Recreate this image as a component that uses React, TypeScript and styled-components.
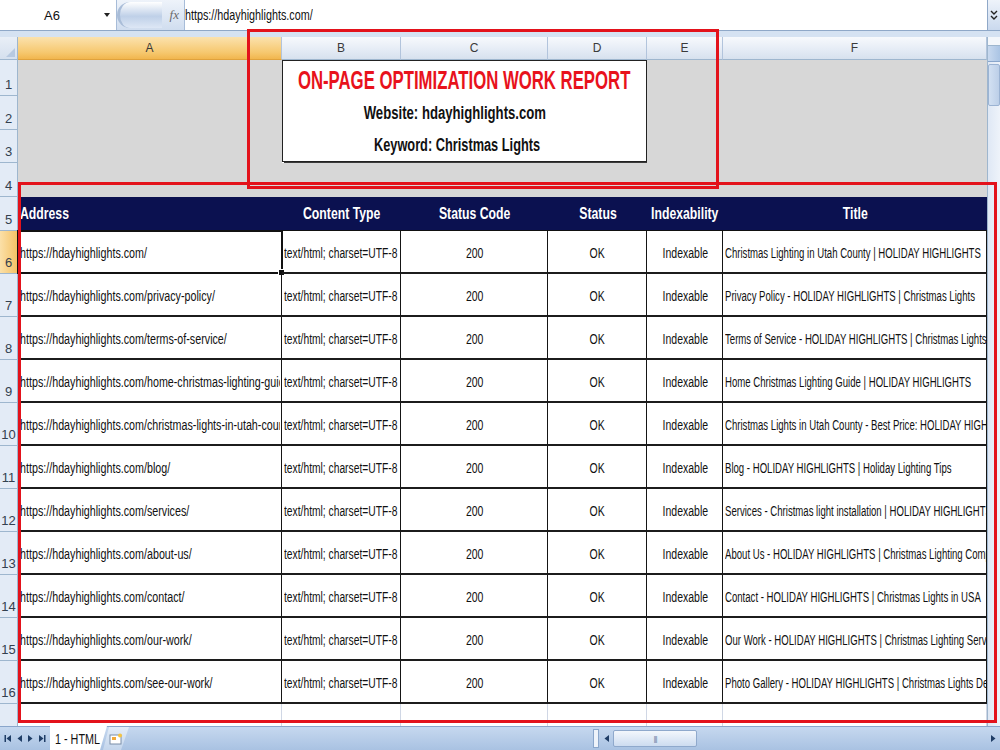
import React from "react";
import styled, { createGlobalStyle, css } from "styled-components";

const UI_FONT = `"Liberation Sans", Arial, sans-serif`;

const GlobalStyle = createGlobalStyle`
  html, body {
    margin: 0;
    padding: 0;
    background: #ffffff;
  }
  body {
    width: 1000px;
    height: 750px;
    overflow: hidden;
    font-family: ${UI_FONT};
  }
`;

const COLS = [
  { key: "A", width: 264 },
  { key: "B", width: 119 },
  { key: "C", width: 147 },
  { key: "D", width: 99 },
  { key: "E", width: 76 },
  { key: "F", width: 264 },
];

const pages: [string, string][] = [
  ["https://hdayhighlights.com/", "Christmas Lighting in Utah County | HOLIDAY HIGHLIGHTS"],
  ["https://hdayhighlights.com/privacy-policy/", "Privacy Policy - HOLIDAY HIGHLIGHTS | Christmas Lights"],
  ["https://hdayhighlights.com/terms-of-service/", "Terms of Service - HOLIDAY HIGHLIGHTS | Christmas Lights"],
  ["https://hdayhighlights.com/home-christmas-lighting-guide/", "Home Christmas Lighting Guide | HOLIDAY HIGHLIGHTS"],
  ["https://hdayhighlights.com/christmas-lights-in-utah-county/", "Christmas Lights in Utah County - Best Price: HOLIDAY HIGHLIGHTS"],
  ["https://hdayhighlights.com/blog/", "Blog - HOLIDAY HIGHLIGHTS | Holiday Lighting Tips"],
  ["https://hdayhighlights.com/services/", "Services - Christmas light installation | HOLIDAY HIGHLIGHTS"],
  ["https://hdayhighlights.com/about-us/", "About Us - HOLIDAY HIGHLIGHTS | Christmas Lighting Company"],
  ["https://hdayhighlights.com/contact/", "Contact - HOLIDAY HIGHLIGHTS | Christmas Lights in USA"],
  ["https://hdayhighlights.com/our-work/", "Our Work - HOLIDAY HIGHLIGHTS | Christmas Lighting Services"],
  ["https://hdayhighlights.com/see-our-work/", "Photo Gallery - HOLIDAY HIGHLIGHTS | Christmas Lights Design"],
];

/* Calibri-like narrow text: Liberation Sans squeezed horizontally */
const Squeeze = styled.span<{ $k: number; $origin?: string }>`
  display: inline-block;
  white-space: nowrap;
  transform: scaleX(${(p) => p.$k});
  transform-origin: ${(p) => p.$origin || "left"} center;
`;

/* ---------- window frame ---------- */

const Window = styled.div`
  position: relative;
  width: 1000px;
  height: 750px;
  display: flex;
  flex-direction: column;
  background: #d5e2f2;
`;

/* ---------- formula bar ---------- */

const FormulaBar = styled.div`
  height: 30px;
  display: flex;
  align-items: stretch;
  background: #cfddef;
  border-bottom: 1px solid #8fa8c8;
`;

const NameBox = styled.div`
  width: 116px;
  display: flex;
  align-items: center;
  background: #ffffff;
  border-right: 1px solid #a7bcd8;
  font-size: 13px;
  color: #111;
`;

const NameText = styled.span`
  flex: 1;
  text-align: center;
`;

const DropArrow = styled.span`
  width: 0;
  height: 0;
  margin-right: 6px;
  border-left: 3px solid transparent;
  border-right: 3px solid transparent;
  border-top: 4px solid #222;
`;

const FxArea = styled.div`
  width: 62px;
  display: flex;
  align-items: center;
  justify-content: flex-end;
  gap: 8px;
  padding-right: 5px;
  background: linear-gradient(#eef3fa, #d0ddef);
  border-right: 1px solid #a7bcd8;
`;

const GripButton = styled.div`
  width: 44px;
  height: 26px;
  margin-right: auto;
  border-radius: 13px 0 0 13px;
  background: linear-gradient(#ffffff, #bfd0e8 55%, #dde7f5);
  border-left: 3px solid #a9bdd8;
`;

const FxLabel = styled.span`
  font-family: "Liberation Serif", serif;
  font-style: italic;
  font-size: 13px;
  color: #6b6b6b;
`;

const FormulaInput = styled.div`
  flex: 1;
  display: flex;
  align-items: center;
  padding-left: 0;
  background: #ffffff;
  font-size: 14px;
  color: #111;
`;

const ExpandButton = styled.div`
  width: 12px;
  display: flex;
  flex-direction: column;
  align-items: center;
  justify-content: center;
  background: linear-gradient(#eef3fa, #cad9ee);
  border-left: 1px solid #8fa8c8;
`;

/* ---------- sheet grid ---------- */

const SheetArea = styled.div`
  flex: 1;
  display: flex;
  margin-top: 6px;
  min-height: 0;
`;

const Grid = styled.div`
  flex: 1;
  display: grid;
  grid-template-columns: 18px ${COLS.map((c) => `${c.width}px`).join(" ")};
  grid-template-rows: 23px 36px 34px 33px 34px 34px repeat(12, 43px);
  background: #ffffff;
  overflow: hidden;
`;

const headerGradient = css<{ $active?: boolean }>`
  background: ${(p) =>
    p.$active
      ? "linear-gradient(#fbe2ae, #f6c86f 70%, #f1b64e)"
      : "linear-gradient(#f7f9fc, #e4ebf5 60%, #d7e1ee)"};
`;

const Corner = styled.div`
  position: relative;
  background: linear-gradient(#e9eff7, #d5e0ee);
  border-right: 1px solid #9eb6ce;
  border-bottom: 1px solid #9eb6ce;
  &::after {
    content: "";
    position: absolute;
    right: 2px;
    bottom: 2px;
    border-left: 9px solid transparent;
    border-bottom: 9px solid #b7c9e0;
  }
`;

const ColHead = styled.div<{ $active?: boolean }>`
  ${headerGradient};
  display: flex;
  align-items: center;
  justify-content: center;
  font-size: 12px;
  color: #3a3a3a;
  border-right: 1px solid #b2c4dc;
  border-bottom: 1px solid ${(p) => (p.$active ? "#e0a23c" : "#9eb6ce")};
`;

const RowHead = styled.div<{ $active?: boolean }>`
  background: ${(p) => (p.$active ? "linear-gradient(90deg, #fbe0a8, #f4c266)" : "#e3ebf6")};
  display: flex;
  align-items: flex-end;
  justify-content: center;
  padding-bottom: 3px;
  font-size: 13px;
  color: #33404f;
  border-right: 1px solid #9eb6ce;
  border-bottom: 1px solid #9eb6ce;
  box-sizing: border-box;
`;

const GrayCell = styled.div`
  background: #d7d7d7;
`;

const TitleBox = styled.div`
  grid-column: 3 / 6;
  grid-row: 2 / 5;
  margin-bottom: 1px;
  display: flex;
  flex-direction: column;
  align-items: center;
  background: #ffffff;
  border: 1px solid #222;
  box-shadow: 2px 2px 0 #3a3a3a;
  font-weight: bold;
  line-height: 1;
`;

const ReportTitle = styled.div`
  margin-top: 7px;
  font-size: 25px;
  color: #e8121c;
`;

const ReportLine = styled.div<{ $shift: number; $gap: number }>`
  margin-top: ${(p) => p.$gap}px;
  margin-left: ${(p) => p.$shift}px;
  font-size: 18px;
  color: #111;
`;

const HeadCell = styled.div<{ $left?: boolean }>`
  background: #0b1150;
  display: flex;
  align-items: center;
  justify-content: ${(p) => (p.$left ? "flex-start" : "center")};
  padding-left: ${(p) => (p.$left ? "2px" : "0")};
  font-size: 17px;
  font-weight: bold;
  color: #ffffff;
  overflow: hidden;
  border-bottom: 1px solid #111;
`;

const DataCell = styled.div<{ $center?: boolean }>`
  position: relative;
  display: flex;
  align-items: center;
  justify-content: ${(p) => (p.$center ? "center" : "flex-start")};
  padding: 3px 1px 0 2px;
  font-size: 14px;
  color: #111;
  overflow: hidden;
  border-right: 1px solid #151515;
  border-bottom: 2px solid #1c1c1c;
  box-sizing: border-box;
`;

const SelectedCell = styled(DataCell)`
  overflow: visible;
`;

const ClipBox = styled.div`
  overflow: hidden;
  flex: 1;
`;

const SelectionFrame = styled.span`
  position: absolute;
  inset: -1px -2px -2px -1px;
  border: 2px solid #111;
  pointer-events: none;
  &::after {
    content: "";
    position: absolute;
    right: -4px;
    bottom: -4px;
    width: 5px;
    height: 5px;
    background: #111;
    border: 1px solid #fff;
  }
`;

const BlankCell = styled.div`
  background: #ffffff;
  border-right: 1px solid #d0d7e5;
`;

/* ---------- scroll bars ---------- */

const VScroll = styled.div`
  width: 12px;
  display: flex;
  flex-direction: column;
  background: linear-gradient(90deg, #dfe8f5, #eef3fa);
  border-left: 1px solid #9eb6ce;
`;

const SplitBox = styled.div`
  height: 8px;
  background: #f4f7fb;
  border-bottom: 1px solid #9eb6ce;
`;

const VArrow = styled.div`
  height: 15px;
  background: linear-gradient(90deg, #c8d9ef, #aac4e4);
  border-bottom: 1px solid #8aa6cb;
`;

const VThumb = styled.div`
  height: 40px;
  margin-top: 2px;
  background: linear-gradient(90deg, #d2e0f2, #bccfe8);
  border: 1px solid #9bb3d3;
  border-radius: 2px;
`;

/* ---------- sheet tabs ---------- */

const TabBar = styled.div`
  height: 23px;
  display: flex;
  align-items: stretch;
  background: linear-gradient(#c6d8ef, #a9c2e2);
  border-top: 1px solid #8aa6cb;
`;

const TabNav = styled.div`
  width: 46px;
  display: flex;
  align-items: center;
  justify-content: space-around;
  padding: 0 2px;
`;

const SheetTab = styled.div`
  display: flex;
  align-items: center;
  width: 52px;
  padding-left: 5px;
  margin-top: -1px;
  background: #ffffff;
  font-size: 15px;
  color: #111;
  overflow: hidden;
  clip-path: polygon(0 0, 100% 0, calc(100% - 7px) 100%, 0 100%);
`;

const NewTab = styled.div`
  width: 26px;
  margin-left: -4px;
  display: flex;
  align-items: center;
  justify-content: center;
  background: linear-gradient(#e4edf8, #c3d5ec);
  clip-path: polygon(6px 0, 100% 0, calc(100% - 8px) 100%, 0 100%);
`;

const HScroll = styled.div`
  margin-left: auto;
  width: 405px;
  display: flex;
  align-items: center;
  gap: 3px;
  padding-right: 2px;
`;

const SplitBar = styled.div`
  width: 4px;
  height: 17px;
  background: #eef3fa;
  border: 1px solid #8aa6cb;
`;

const HThumb = styled.div`
  width: 82px;
  height: 15px;
  display: flex;
  align-items: center;
  justify-content: center;
  background: linear-gradient(#f3f7fc, #cddcf0);
  border: 1px solid #8fa9cc;
  border-radius: 2px;
  font-size: 8px;
  color: #6f87a8;
  letter-spacing: -1px;
`;

const HTrack = styled.div`
  flex: 1;
`;

/* ---------- annotation outlines ---------- */

const Outline = styled.div`
  position: absolute;
  border: 3px solid #e3121b;
  pointer-events: none;
`;

const NavTriangle: React.FC<{ dir: "left" | "right"; bar?: boolean }> = ({ dir, bar }) => (
  <svg width="8" height="9" viewBox="0 0 8 9">
    {dir === "left" ? (
      <>
        {bar && <rect x="0.5" y="1" width="1.5" height="7" fill="#1f3d66" />}
        <polygon points="7,1 7,8 2.5,4.5" fill="#1f3d66" />
      </>
    ) : (
      <>
        <polygon points="1,1 1,8 5.5,4.5" fill="#1f3d66" />
        {bar && <rect x="6" y="1" width="1.5" height="7" fill="#1f3d66" />}
      </>
    )}
  </svg>
);

const headers = ["Content Type", "Status Code", "Status", "Indexability", "Title"];

const App: React.FC = () => {
  return (
    <Window>
      <GlobalStyle />

      <FormulaBar>
        <NameBox>
          <NameText>A6</NameText>
          <DropArrow />
        </NameBox>
        <FxArea>
          <GripButton />
          <FxLabel>fx</FxLabel>
        </FxArea>
        <FormulaInput>
          <Squeeze $k={0.77}>https://hdayhighlights.com/</Squeeze>
        </FormulaInput>
        <ExpandButton>
          <svg width="8" height="12" viewBox="0 0 8 12">
            <polyline points="1,2 4,5 7,2" fill="none" stroke="#222" strokeWidth="1.4" />
            <polyline points="1,7 4,10 7,7" fill="none" stroke="#222" strokeWidth="1.4" />
          </svg>
        </ExpandButton>
      </FormulaBar>

      <SheetArea>
        <Grid>
          <Corner />
          {COLS.map((c) => (
            <ColHead key={c.key} $active={c.key === "A"}>
              {c.key}
            </ColHead>
          ))}

          {/* rows 1-4: grey band, report title box over B1:D3 */}
          {[1, 2, 3].map((r) => (
            <React.Fragment key={r}>
              <RowHead>{r}</RowHead>
              <GrayCell />
              {r === 1 && (
                <TitleBox>
                  <ReportTitle>
                    <Squeeze $k={0.67} $origin="center">
                      ON-PAGE OPTIMIZATION WORK REPORT
                    </Squeeze>
                  </ReportTitle>
                  <ReportLine $shift={-20} $gap={11}>
                    <Squeeze $k={0.73} $origin="center">
                      Website: hdayhighlights.com
                    </Squeeze>
                  </ReportLine>
                  <ReportLine $shift={-14} $gap={14}>
                    <Squeeze $k={0.71} $origin="center">
                      Keyword: Christmas Lights
                    </Squeeze>
                  </ReportLine>
                </TitleBox>
              )}
              <GrayCell />
              <GrayCell />
            </React.Fragment>
          ))}
          <RowHead>4</RowHead>
          {COLS.map((c) => (
            <GrayCell key={c.key} />
          ))}

          <RowHead>5</RowHead>
          <HeadCell $left>
            <Squeeze $k={0.72}>Address</Squeeze>
          </HeadCell>
          {headers.map((h) => (
            <HeadCell key={h}>
              <Squeeze $k={0.72} $origin="center">
                {h}
              </Squeeze>
            </HeadCell>
          ))}

          {pages.map(([url, title], i) => {
            const Lead = i === 0 ? SelectedCell : DataCell;
            return (
              <React.Fragment key={url}>
                <RowHead $active={i === 0}>{i + 6}</RowHead>
                <Lead>
                  <ClipBox>
                    <Squeeze $k={0.766}>{url}</Squeeze>
                  </ClipBox>
                  {i === 0 && <SelectionFrame />}
                </Lead>
                <DataCell>
                  <Squeeze $k={0.734}>text/html; charset=UTF-8</Squeeze>
                </DataCell>
                <DataCell $center>
                  <Squeeze $k={0.75} $origin="center">200</Squeeze>
                </DataCell>
                <DataCell $center>
                  <Squeeze $k={0.75} $origin="center">OK</Squeeze>
                </DataCell>
                <DataCell $center>
                  <Squeeze $k={0.75} $origin="center">Indexable</Squeeze>
                </DataCell>
                <DataCell>
                  <Squeeze $k={0.685}>{title}</Squeeze>
                </DataCell>
              </React.Fragment>
            );
          })}

          <RowHead>17</RowHead>
          {COLS.map((c) => (
            <BlankCell key={c.key} />
          ))}
        </Grid>

        <VScroll>
          <SplitBox />
          <VArrow />
          <VThumb />
        </VScroll>
      </SheetArea>

      <TabBar>
        <TabNav>
          <NavTriangle dir="left" bar />
          <NavTriangle dir="left" />
          <NavTriangle dir="right" />
          <NavTriangle dir="right" bar />
        </TabNav>
        <SheetTab>
          <Squeeze $k={0.72}>1 - HTML</Squeeze>
        </SheetTab>
        <NewTab>
          <svg width="14" height="12" viewBox="0 0 14 12">
            <rect x="1" y="2" width="11" height="9" fill="#ffffff" stroke="#7a8ea8" />
            <rect x="3" y="4" width="4" height="3" fill="#f1a93b" />
            <circle cx="11" cy="2.5" r="2" fill="#f4c443" />
          </svg>
        </NewTab>
        <HScroll>
          <SplitBar />
          <NavTriangle dir="left" />
          <HThumb>|||</HThumb>
          <HTrack />
          <NavTriangle dir="right" />
        </HScroll>
      </TabBar>

      <Outline style={{ left: 247, top: 29, width: 466, height: 154 }} />
      <Outline style={{ left: 18, top: 182, width: 973, height: 535 }} />
    </Window>
  );
};

export default App;
